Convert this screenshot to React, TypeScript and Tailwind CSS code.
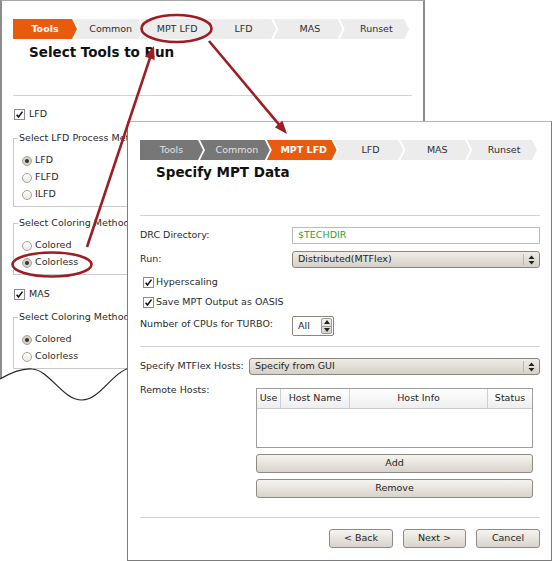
import React from 'react'

const FIRST = '[clip-path:polygon(0_0,calc(100%_-_5px)_0,100%_50%,calc(100%_-_5px)_100%,0_100%)]'
const REST = '[clip-path:polygon(0_0,calc(100%_-_5px)_0,100%_50%,calc(100%_-_5px)_100%,0_100%,5px_50%)]'

const steps = ['Tools', 'Common', 'MPT LFD', 'LFD', 'MAS', 'Runset']

const Breadcrumb = ({ active, className, firstW }: { active: number; className: string; firstW: string }) => (
  <div className={`flex h-[20px] shrink-0 ${className}`}>
    {steps.map((s, i) => {
      const tone =
        i < active
          ? 'bg-[#777777] text-[#e2e2e2]'
          : i === active
            ? 'bg-[#ea5a0c] font-bold text-white'
            : 'bg-[#ececec] text-[#2e2e2e]'
      return (
        <div
          key={s}
          className={`flex h-full items-center justify-center ${tone} ${i === 0 ? `${FIRST} ${firstW} shrink-0` : `${REST} -ml-[3px] flex-1 pl-[4px]`}`}
        >
          {s}
        </div>
      )
    })}
  </div>
)

const Check = () => (
  <span className="flex h-[11px] w-[11px] shrink-0 items-center justify-center border border-[#8a8a8a] bg-white">
    <svg width="9" height="9" viewBox="0 0 9 9">
      <path d="M1.6 4.7 L3.5 7 L7.5 1.6" fill="none" stroke="#111" strokeWidth="1.5" />
    </svg>
  </span>
)

const Radio = ({ on }: { on?: boolean }) => (
  <span
    className={`flex h-[10px] w-[10px] shrink-0 items-center justify-center rounded-full border border-[#a9a39b] ${on ? 'bg-[#d3cfc9]' : 'bg-linear-to-b from-white to-[#ebe8e3]'}`}
  >
    {on && <span className="h-[4px] w-[4px] rounded-full bg-[#333]" />}
  </span>
)

const UpDown = () => (
  <svg width="7" height="10" viewBox="0 0 7 10">
    <path d="M3.5 0.5 L6.5 4 L0.5 4 Z M0.5 6 L6.5 6 L3.5 9.5 Z" fill="#222" />
  </svg>
)

const Select = ({ value, className }: { value: string; className?: string }) => (
  <div
    className={`flex h-[17px] items-center rounded-[3px] border border-[#8b867e] bg-linear-to-b from-[#efece7] to-[#d5d1c9] ${className ?? ''}`}
  >
    <span className="flex-1 pl-[5px] text-[#1e1e1e]">{value}</span>
    <span className="flex h-[11px] w-[16px] items-center justify-center border-l border-[#b9b4ac]">
      <UpDown />
    </span>
  </div>
)

const Btn = ({ children, className }: { children: React.ReactNode; className?: string }) => (
  <div
    className={`flex h-[19px] items-center justify-center rounded-[3px] border border-[#8f8a83] bg-linear-to-b from-[#f6f4f0] to-[#d8d4cc] text-[#1e1e1e] ${className ?? ''}`}
  >
    {children}
  </div>
)

const Group = ({ title, items, on, className }: { title: string; items: string[]; on: number; className?: string }) => (
  <fieldset className={`border border-[#c9c9c9] pb-[3px] pl-[8px] pt-[8px] ${className ?? ''}`}>
    <legend className="-ml-[4px] px-[1px] leading-[12px] text-[#2a2a2a]">{title}</legend>
    {items.map((t, i) => (
      <div key={t} className="flex h-[17px] items-center gap-[3px]">
        <Radio on={i === on} />
        <span>{t}</span>
      </div>
    ))}
  </fieldset>
)

const Arrow = ({ x1, y1, x2, y2 }: { x1: number; y1: number; x2: number; y2: number }) => {
  const a = Math.atan2(y2 - y1, x2 - x1)
  const L = 13
  const W = 5
  const bx = x2 - L * Math.cos(a)
  const by = y2 - L * Math.sin(a)
  const px = -Math.sin(a) * W
  const py = Math.cos(a) * W
  return (
    <g>
      <line x1={x1} y1={y1} x2={bx + 2 * Math.cos(a)} y2={by + 2 * Math.sin(a)} stroke="#9c1d23" strokeWidth="2.6" />
      <polygon points={`${x2},${y2} ${bx + px},${by + py} ${bx - px},${by - py}`} fill="#9c1d23" />
    </g>
  )
}

export default function App() {
  return (
    <div className="relative h-[561px] w-[552px] overflow-hidden bg-white font-['DejaVu_Sans',sans-serif] text-[9.5px] text-[#2a2a2a]">
      {/* back window */}
      <div className="absolute left-0 top-0 flex h-[420px] w-[425px] flex-col border-l-2 border-r-2 border-t border-[#8c8c8c] border-t-[#a8a8a8] bg-white px-[11px] pt-[18px]">
        <Breadcrumb active={0} className="w-[396px]" firstW="w-[64px]" />
        <div className="flex h-[26px] items-center pl-[16px] text-[13.5px] font-bold text-[#111]">Select Tools to Run</div>
        <div className="mt-[30px] h-px bg-[#d2d2d2]" />
        <div className="mt-[10px] flex h-[16px] items-center gap-[4px] pl-[1px]">
          <Check />
          <span>LFD</span>
        </div>
        <Group className="mt-[10px]" title="Select LFD Process Method" items={['LFD', 'FLFD', 'ILFD']} on={0} />
        <Group className="mt-[10px]" title="Select Coloring Method" items={['Colored', 'Colorless']} on={1} />
        <div className="mt-[11px] flex h-[16px] items-center gap-[4px] pl-[1px]">
          <Check />
          <span>MAS</span>
        </div>
        <Group className="mt-[9px]" title="Select Coloring Method" items={['Colored', 'Colorless']} on={0} />
      </div>

      {/* torn edge */}
      <svg className="absolute left-0 top-0" width="552" height="561">
        <path d="M0,379 C12,372 22,368 32,369 C50,370 62,400 82,400 C100,400 112,372 130,368 L430,368 L430,561 L0,561 Z" fill="#fff" />
        <path d="M0,379 C12,372 22,368 32,369 C50,370 62,400 82,400 C100,400 112,372 130,368" fill="none" stroke="#222" strokeWidth="1.2" />
      </svg>

      {/* front window */}
      <div className="absolute left-[127px] top-[121px] flex h-[440px] w-[425px] flex-col border border-[#7c7c7c] border-t-[#b4b4b4] bg-white pl-[12px] pr-[11px] pt-[18px]">
        <Breadcrumb active={2} className="w-[397px]" firstW="w-[63px]" />
        <div className="flex h-[24px] items-center pl-[16px] text-[13.5px] font-bold text-[#111]">Specify MPT Data</div>
        <div className="mt-[31px] h-px bg-[#d2d2d2]" />

        <div className="mt-[11px] flex h-[17px] items-center">
          <span className="w-[152px]">DRC Directory:</span>
          <div className="flex h-full flex-1 items-center border border-[#bdbdbd] bg-white pl-[5px] text-[#2f9e35]">$TECHDIR</div>
        </div>
        <div className="mt-[7px] flex h-[17px] items-center">
          <span className="w-[152px]">Run:</span>
          <Select value="Distributed(MTFlex)" className="flex-1" />
        </div>
        <div className="mt-[6px] flex h-[16px] items-center gap-[2px] pl-[3px]">
          <Check />
          <span>Hyperscaling</span>
        </div>
        <div className="mt-[4px] flex h-[16px] items-center gap-[2px] pl-[3px]">
          <Check />
          <span>Save MPT Output as OASIS</span>
        </div>
        <div className="mt-[6px] flex h-[20px] items-start">
          <span className="w-[152px] pt-[1px]">Number of CPUs for TURBO:</span>
          <div className="flex h-[20px] w-[42px] items-center rounded-[2px] border border-[#8b867e] bg-white pr-[1px]">
            <span className="flex-1 pl-[5px] text-[#1e1e1e]">All</span>
            <div className="flex h-[16px] w-[11px] flex-col rounded-[2px] border border-[#a09b93] bg-linear-to-b from-[#f2f0ec] to-[#d6d2ca]">
              <span className="flex flex-1 items-center justify-center border-b border-[#a09b93]">
                <svg width="6" height="4" viewBox="0 0 6 4"><path d="M3 0 L6 4 L0 4 Z" fill="#222" /></svg>
              </span>
              <span className="flex flex-1 items-center justify-center">
                <svg width="6" height="4" viewBox="0 0 6 4"><path d="M0 0 L6 0 L3 4 Z" fill="#222" /></svg>
              </span>
            </div>
          </div>
        </div>
        <div className="mt-[10px] h-px bg-[#d2d2d2]" />

        <div className="mt-[11px] flex h-[17px] items-center">
          <span className="w-[109px]">Specify MTFlex Hosts:</span>
          <Select value="Specify from GUI" className="flex-1" />
        </div>
        <div className="mt-[13px] flex items-start">
          <span className="-mt-[4px] w-[116px] leading-[12px]">Remote Hosts:</span>
          <div className="mr-[7px] flex h-[60px] flex-1 flex-col border border-[#9e9e9e] bg-white">
            <div className="flex h-[20px] border-b border-[#c8c8c8] bg-linear-to-b from-white to-[#eeeeee] text-[#1e1e1e]">
              <div className="flex w-[24px] items-center justify-center border-r border-[#cfcfcf]">Use</div>
              <div className="flex w-[69px] items-center justify-center border-r border-[#cfcfcf]">Host Name</div>
              <div className="flex w-[138px] items-center justify-center border-r border-[#cfcfcf]">Host Info</div>
              <div className="flex flex-1 items-center justify-center">Status</div>
            </div>
          </div>
        </div>
        <Btn className="ml-[116px] mr-[7px] mt-[6px]">Add</Btn>
        <Btn className="ml-[116px] mr-[7px] mt-[6px]">Remove</Btn>
        <div className="mt-[19px] h-px bg-[#d2d2d2]" />
        <div className="mt-[11px] flex justify-end gap-[10px]">
          <Btn className="w-[64px]">&lt; Back</Btn>
          <Btn className="w-[63px]">Next &gt;</Btn>
          <Btn className="w-[64px]">Cancel</Btn>
        </div>
      </div>

      {/* annotations */}
      <svg className="pointer-events-none absolute left-0 top-0" width="552" height="561">
        <ellipse cx="176.5" cy="28.5" rx="35" ry="13.5" fill="none" stroke="#9c1d23" strokeWidth="2.6" />
        <ellipse cx="52" cy="264.5" rx="39.5" ry="12" fill="none" stroke="#9c1d23" strokeWidth="2.6" />
        <Arrow x1={87} y1={247} x2={154} y2={46} />
        <Arrow x1={209} y1={41} x2={287} y2={134} />
      </svg>
    </div>
  )
}
